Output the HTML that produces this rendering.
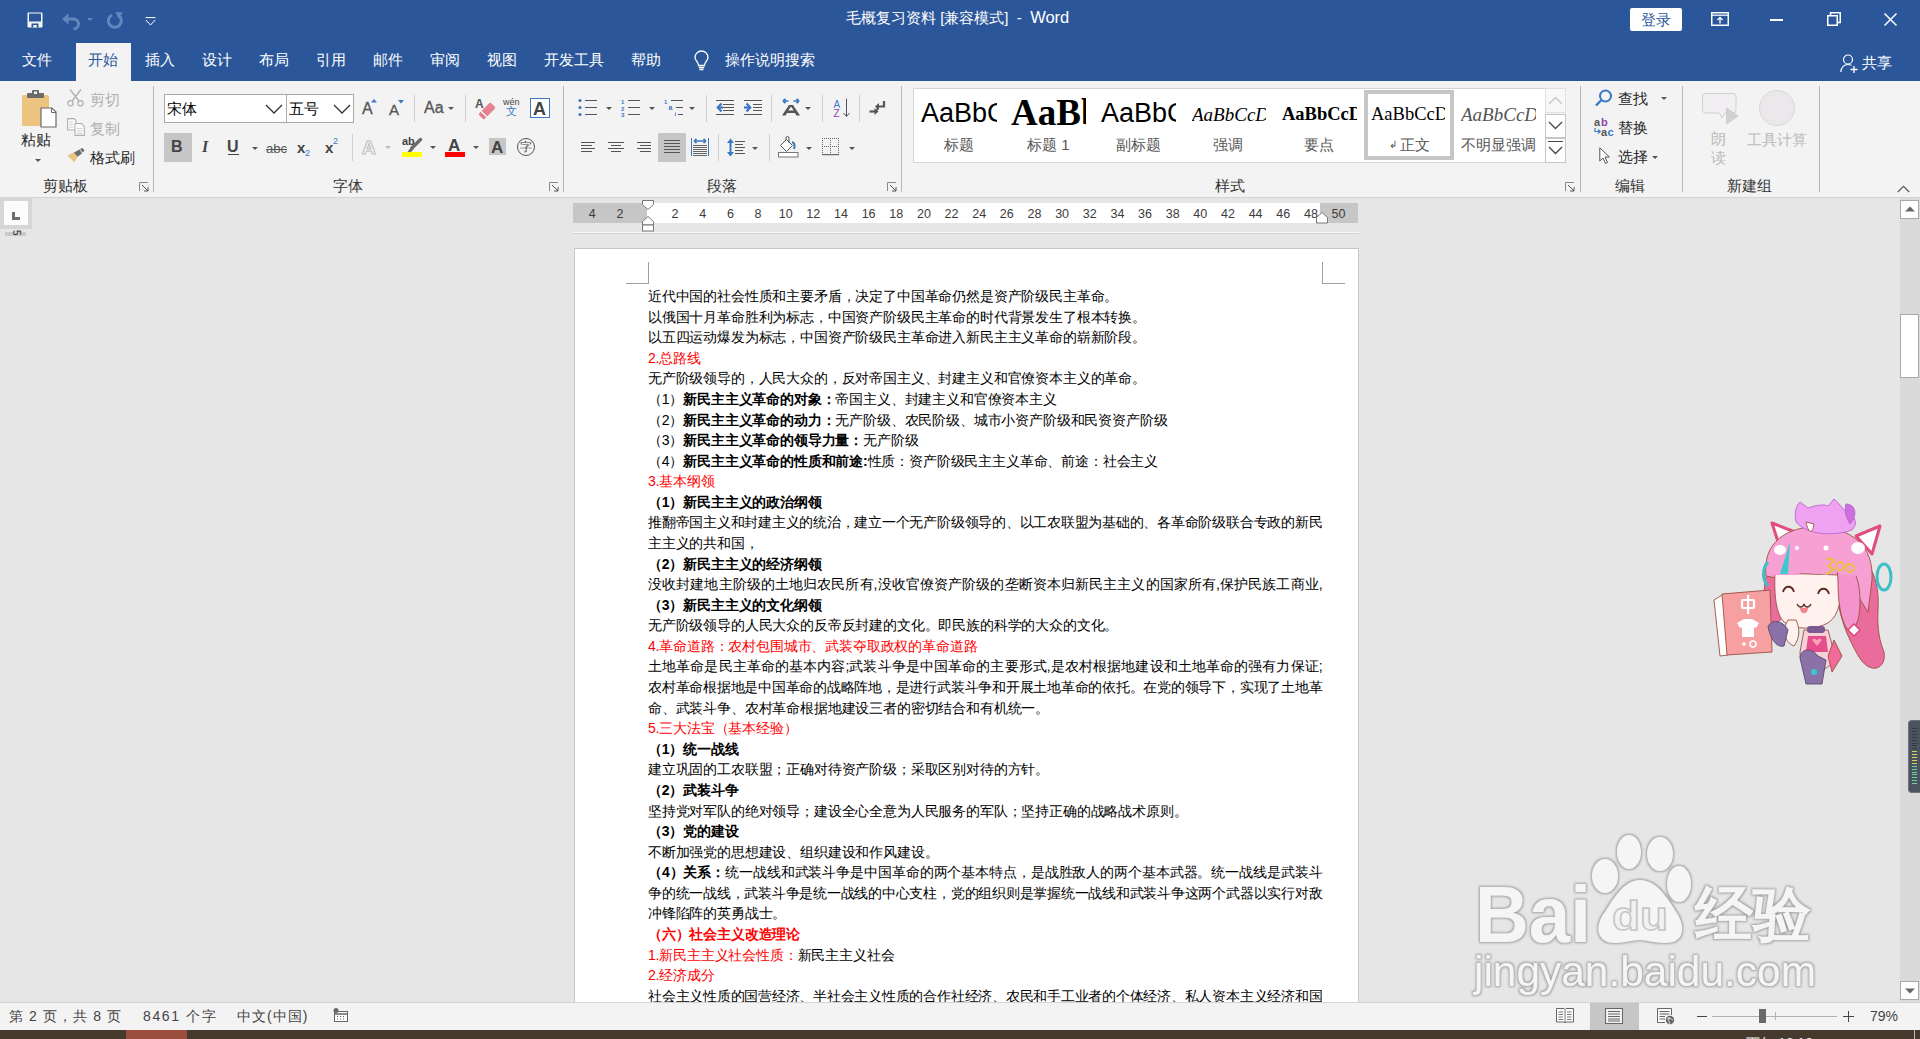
<!DOCTYPE html>
<html><head><meta charset="utf-8">
<style>
*{box-sizing:border-box}
html,body{margin:0;padding:0}
body{width:1920px;height:1039px;overflow:hidden;position:relative;background:#e6e6e6;font-family:"Liberation Sans",sans-serif;color:#262626}
.a{position:absolute}
.t{position:absolute;white-space:nowrap;line-height:1}
svg{position:absolute;overflow:visible}
#top{left:0;top:0;width:1920px;height:81px;background:#2b579a}
#ribbon{left:0;top:81px;width:1920px;height:117px;background:#f3f3f3;border-bottom:1px solid #d4d4d4}
.tab{position:absolute;top:51px;font-size:15px;color:#fff;line-height:17px;white-space:nowrap}
.lbl{position:absolute;top:177px;font-size:15px;color:#333;line-height:17px;white-space:nowrap}
.sep{position:absolute;width:1px;background:#b8b8b8}
.rt{position:absolute;font-size:15px;color:#262626;line-height:17px;white-space:nowrap}
.dd{position:absolute;width:0;height:0;border-left:3px solid transparent;border-right:3px solid transparent;border-top:3px solid #555}
#page{left:574px;top:248px;width:785px;height:760px;background:#fff;border:1px solid #c6c6c6;border-bottom:none}
.ln{position:absolute;left:73px;font-size:14px;letter-spacing:-0.17px;line-height:16px;white-space:nowrap;color:#000}
.j{width:674px;text-align:justify;text-align-last:justify;letter-spacing:-0.6px}
.r{color:#ff0000}
b{font-weight:bold}
</style></head><body>

<!-- ===== TOP BLUE ===== -->
<div id="top" class="a"></div>
<!-- quick access -->
<svg style="left:27px;top:12px" width="16" height="16" viewBox="0 0 16 16"><rect x="0.5" y="0.5" width="15" height="15" rx="1" fill="#f5f5f5"/><rect x="2" y="1.5" width="12" height="8" fill="#2b579a"/><rect x="4.5" y="11.5" width="7" height="4" fill="#2b579a"/><rect x="6.3" y="13" width="3.4" height="2.5" fill="#f5f5f5"/></svg>
<svg style="left:62px;top:14px" width="20" height="16" viewBox="0 0 20 16"><path d="M4 5 H11.5 A5 5 0 0 1 11.5 15" fill="none" stroke="#6286be" stroke-width="3"/><path d="M0 5 L6.5 -0.5 L6.5 10.5 Z" fill="#6286be"/></svg>
<div class="dd" style="left:87px;top:18px;border-top-color:#6286be"></div>
<svg style="left:107px;top:12px" width="17" height="17" viewBox="0 0 17 17"><path d="M11.5 3.5 A6.5 6.5 0 1 1 5 3" fill="none" stroke="#6286be" stroke-width="3"/><path d="M8.5 0 L16 0.5 L11.5 6.5 Z" fill="#6286be"/></svg>
<svg style="left:145px;top:17px" width="11" height="9" viewBox="0 0 11 9"><path d="M0.5 0.6 H10.5" stroke="#fff" stroke-width="1"/><path d="M0.8 3 L5.5 8 L10.2 3" fill="none" stroke="#fff" stroke-width="1"/></svg>
<div class="t" style="left:846px;top:9px;font-size:15px;color:#fff;line-height:17px">毛概复习资料 [兼容模式]&nbsp; -&nbsp; <span style="font-size:16.5px">Word</span></div>
<div class="a" style="left:1630px;top:8px;width:52px;height:23px;background:#fff;border-radius:2px"></div>
<div class="t" style="left:1641px;top:11px;font-size:15px;color:#2b579a;line-height:17px">登录</div>
<svg style="left:1711px;top:12px" width="18" height="14" viewBox="0 0 18 14"><rect x="0.75" y="0.75" width="16.5" height="12.5" fill="none" stroke="#fff" stroke-width="1.5"/><path d="M1 3.2 H17" stroke="#fff" stroke-width="1.2"/><path d="M9 11.5 V5.5 M6.5 8 L9 5.5 L11.5 8" fill="none" stroke="#fff" stroke-width="1.3"/></svg>
<div class="a" style="left:1770px;top:19px;width:13px;height:1.5px;background:#fff"></div>
<svg style="left:1827px;top:12px" width="14" height="14" viewBox="0 0 14 14"><rect x="0.75" y="3.75" width="9.5" height="9.5" fill="none" stroke="#fff" stroke-width="1.5"/><path d="M3.5 3.5 V0.75 H13.25 V10.5 H10.5" fill="none" stroke="#fff" stroke-width="1.5"/></svg>
<svg style="left:1884px;top:13px" width="13" height="13" viewBox="0 0 13 13"><path d="M0.5 0.5 L12.5 12.5 M12.5 0.5 L0.5 12.5" stroke="#fff" stroke-width="1.5"/></svg>

<!-- tabs -->
<div class="a" style="left:76px;top:43px;width:55px;height:38px;background:#f3f3f3"></div>
<div class="tab" style="left:22px">文件</div>
<div class="tab" style="left:88px;color:#2b579a">开始</div>
<div class="tab" style="left:145px">插入</div>
<div class="tab" style="left:202px">设计</div>
<div class="tab" style="left:259px">布局</div>
<div class="tab" style="left:316px">引用</div>
<div class="tab" style="left:373px">邮件</div>
<div class="tab" style="left:430px">审阅</div>
<div class="tab" style="left:487px">视图</div>
<div class="tab" style="left:544px">开发工具</div>
<div class="tab" style="left:631px">帮助</div>
<svg style="left:694px;top:51px" width="15" height="21" viewBox="0 0 15 21"><path d="M4.5 14.5 C4.5 11 1 9.5 1 6.5 A6.5 6.5 0 0 1 14 6.5 C14 9.5 10.5 11 10.5 14.5 Z" fill="none" stroke="#fff" stroke-width="1.3"/><path d="M4.8 16.5 H10.2 M5.5 18.5 H9.5" stroke="#fff" stroke-width="1.3"/></svg>
<div class="tab" style="left:725px">操作说明搜索</div>
<svg style="left:1840px;top:54px" width="19" height="19" viewBox="0 0 19 19"><circle cx="8" cy="5.5" r="4.5" fill="none" stroke="#fff" stroke-width="1.2"/><path d="M0.8 18 C1.5 12.5 4.5 10.5 8 10.5 C9.5 10.5 10.5 10.8 11.5 11.3" fill="none" stroke="#fff" stroke-width="1.2"/><path d="M14 12 V19 M10.5 15.5 H17.5" stroke="#fff" stroke-width="1.3"/></svg>
<div class="tab" style="left:1862px;top:54px">共享</div>

<!-- ===== RIBBON ===== -->
<div id="ribbon" class="a"></div>
<!-- clipboard group -->
<svg style="left:22px;top:90px" width="35" height="40" viewBox="0 0 35 40"><rect x="0" y="5" width="27" height="31" rx="1.5" fill="#ecc37f"/><rect x="5" y="3" width="17" height="5" rx="1" fill="#6b6b6b"/><rect x="10" y="0" width="7" height="5" rx="1" fill="#6b6b6b"/><rect x="12" y="1.5" width="3" height="2.5" fill="#f3f3f3"/><path d="M19 18 H30 L34 22 V37 H19 Z" fill="#fff" stroke="#6b6b6b" stroke-width="1.2"/><path d="M29.5 18 V22.5 H34" fill="none" stroke="#6b6b6b" stroke-width="1"/></svg>
<div class="rt" style="left:21px;top:131px">粘贴</div>
<div class="dd" style="left:35px;top:159px;border-left-width:3.5px;border-right-width:3.5px;border-top-width:3.5px"></div>
<svg style="left:67px;top:89px" width="17" height="18" viewBox="0 0 17 18"><circle cx="3.5" cy="14.3" r="2.6" fill="none" stroke="#b0b0b0" stroke-width="1.2"/><circle cx="13.5" cy="14.3" r="2.6" fill="none" stroke="#b0b0b0" stroke-width="1.2"/><path d="M5 12 L14 0.5 M12 12 L3 0.5" stroke="#b0b0b0" stroke-width="1.3"/></svg>
<div class="rt" style="left:90px;top:91px;color:#b0b0b0">剪切</div>
<svg style="left:67px;top:118px" width="18" height="18" viewBox="0 0 18 18"><path d="M0.6 0.6 H7 L9 2.6 V12 H0.6 Z" fill="#fafafa" stroke="#b0b0b0" stroke-width="1.1"/><path d="M8 5.5 H14.5 L17.4 8.4 V17.4 H8 Z" fill="#fafafa" stroke="#b0b0b0" stroke-width="1.1"/><path d="M2.5 4 H6 M2.5 6.5 H6 M2.5 9 H6 M10 10.5 H15.5 M10 13 H15.5 M10 15.5 H15.5" stroke="#c8c8c8" stroke-width="0.8"/></svg>
<div class="rt" style="left:90px;top:120px;color:#b0b0b0">复制</div>
<svg style="left:67px;top:148px" width="18" height="15" viewBox="0 0 18 15"><path d="M0.5 7.5 L7.5 4 L10.5 9 L7.5 14.5 Z" fill="#ecc37f"/><path d="M7 4.5 L12.5 1.5 L15 5.5 L10.5 8.7 Z" fill="#6b6b6b"/><path d="M13 1 L15.5 0 L17.5 2.5 L15.5 4.5 Z" fill="#6b6b6b"/></svg>
<div class="rt" style="left:90px;top:149px">格式刷</div>
<div class="lbl" style="left:43px">剪贴板</div>
<svg style="left:139px;top:182px" width="10" height="10" viewBox="0 0 10 10"><path d="M0.5 9 V0.5 H9" fill="none" stroke="#888" stroke-width="1"/><path d="M3 3 L9 9 M9 5 V9 H5" fill="none" stroke="#555" stroke-width="1"/></svg>
<div class="sep" style="left:153px;top:86px;height:106px"></div>

<!-- font group -->
<div class="a" style="left:164px;top:94px;width:123px;height:29px;background:#fff;border:1px solid #a9a9a9"></div>
<div class="a" style="left:286px;top:94px;width:68px;height:29px;background:#fff;border:1px solid #a9a9a9"></div>
<div class="rt" style="left:167px;top:100px;color:#000">宋体</div>
<div class="rt" style="left:289px;top:100px;color:#000">五号</div>
<svg style="left:265px;top:104px" width="18" height="10" viewBox="0 0 18 10"><path d="M1 1 L9 9 L17 1" fill="none" stroke="#333" stroke-width="1.3"/></svg>
<svg style="left:333px;top:104px" width="18" height="10" viewBox="0 0 18 10"><path d="M1 1 L9 9 L17 1" fill="none" stroke="#333" stroke-width="1.3"/></svg>
<div class="t" style="left:362px;top:101px;font-size:16px;color:#555;-webkit-text-stroke:0.3px #555">A</div>
<svg style="left:371px;top:99px" width="6" height="4" viewBox="0 0 6 4"><path d="M0 3.5 L3 0 L6 3.5Z" fill="#3a78c3"/></svg>
<div class="t" style="left:389px;top:102px;font-size:15px;color:#555;-webkit-text-stroke:0.3px #555">A</div>
<svg style="left:398px;top:100px" width="6" height="4" viewBox="0 0 6 4"><path d="M0 0 L3 3.5 L6 0Z" fill="#3a78c3"/></svg>
<div class="sep" style="left:414px;top:95px;height:27px;background:#d0d0d0"></div>
<div class="t" style="left:424px;top:100px;font-size:16px;color:#555;-webkit-text-stroke:0.3px #555">Aa</div>
<div class="dd" style="left:448px;top:107px"></div>
<div class="sep" style="left:465px;top:95px;height:27px;background:#d0d0d0"></div>
<div class="t" style="left:475px;top:98px;font-size:12px;font-weight:bold;color:#555">A</div>
<svg style="left:479px;top:103px" width="16" height="16" viewBox="0 0 16 16"><g transform="rotate(-45 8 8)"><rect x="-0.5" y="4" width="17" height="8" rx="1.8" fill="#e5828f"/><rect x="3" y="4" width="1.3" height="8" fill="#fff"/></g></svg>
<div class="t" style="left:503px;top:98px;font-size:9px;color:#444">wén</div>
<div class="t" style="left:506px;top:106px;font-size:11px;color:#3a78c3">文</div>
<div class="a" style="left:530px;top:98px;width:20px;height:20px;border:1.5px solid #3a78c3;background:#fff"></div>
<div class="t" style="left:533px;top:100px;font-size:18px;font-weight:bold;color:#444">A</div>
<div class="a" style="left:164px;top:133px;width:28px;height:29px;background:#c6c6c6"></div>
<div class="t" style="left:171px;top:139px;font-size:16px;font-weight:bold;color:#444">B</div>
<div class="t" style="left:202px;top:139px;font-size:16px;font-style:italic;font-family:'Liberation Serif',serif;font-weight:bold;color:#444">I</div>
<div class="t" style="left:227px;top:139px;font-size:16px;color:#444;font-weight:bold">U</div>
<div class="a" style="left:228px;top:154px;width:11px;height:1px;background:#444"></div>
<div class="dd" style="left:252px;top:147px"></div>
<div class="t" style="left:266px;top:142px;font-size:13px;color:#555">abc</div>
<div class="a" style="left:266px;top:149px;width:21px;height:1px;background:#555"></div>
<div class="t" style="left:297px;top:140px;font-size:15px;color:#444;font-weight:bold">x</div>
<div class="t" style="left:305px;top:149px;font-size:9px;color:#3a78c3">2</div>
<div class="t" style="left:325px;top:140px;font-size:15px;color:#444;font-weight:bold">x</div>
<div class="t" style="left:333px;top:137px;font-size:9px;color:#3a78c3">2</div>
<div class="sep" style="left:352px;top:134px;height:27px;background:#d0d0d0"></div>
<div class="t" style="left:362px;top:138px;font-size:19px;font-weight:bold;color:#fff;-webkit-text-stroke:1.2px #c0c0c0">A</div>
<div class="dd" style="left:385px;top:146px;border-top-color:#bbb"></div>
<div class="t" style="left:402px;top:136px;font-size:11px;font-weight:bold;color:#444">ab</div>
<svg style="left:406px;top:138px" width="16" height="15" viewBox="0 0 16 15"><path d="M14.5 1.5 L6 10" stroke="#6b6b6b" stroke-width="3.4" stroke-linecap="round"/><path d="M5 9 L7.5 11.5 L5 14 L1.5 14 Z" fill="#6b6b6b"/></svg>
<div class="a" style="left:402px;top:152px;width:20px;height:5px;background:#ffff00"></div>
<div class="dd" style="left:430px;top:146px"></div>
<div class="t" style="left:448px;top:137px;font-size:17px;font-weight:bold;color:#444">A</div>
<div class="a" style="left:445px;top:152px;width:20px;height:5px;background:#ff0000"></div>
<div class="dd" style="left:473px;top:146px"></div>
<div class="a" style="left:489px;top:138px;width:17px;height:17px;background:#c6c6c6"></div>
<div class="t" style="left:491px;top:139px;font-size:17px;font-weight:bold;color:#444">A</div>
<div class="a" style="left:517px;top:138px;width:18px;height:18px;border:1px solid #555;border-radius:50%"></div>
<div class="t" style="left:520px;top:141px;font-size:12px;color:#444">字</div>
<div class="lbl" style="left:333px">字体</div>
<svg style="left:549px;top:182px" width="10" height="10" viewBox="0 0 10 10"><path d="M0.5 9 V0.5 H9" fill="none" stroke="#888" stroke-width="1"/><path d="M3 3 L9 9 M9 5 V9 H5" fill="none" stroke="#555" stroke-width="1"/></svg>
<div class="sep" style="left:563px;top:86px;height:106px"></div>
<!-- paragraph group -->
<svg style="left:578px;top:98px" width="20" height="18" viewBox="0 0 20 18"><circle cx="2" cy="2.5" r="1.6" fill="#3a78c3"/><circle cx="2" cy="9.5" r="1.6" fill="#3a78c3"/><circle cx="2" cy="16.5" r="1.6" fill="#3a78c3"/><path d="M7 2.5 H19 M7 9.5 H19 M7 16.5 H19" stroke="#555" stroke-width="1.1"/></svg>
<div class="dd" style="left:606px;top:107px"></div>
<svg style="left:621px;top:98px" width="20" height="19" viewBox="0 0 20 19"><text x="0" y="6" font-size="6" fill="#3a78c3" font-family="Liberation Sans" font-weight="bold">1</text><text x="0" y="12.5" font-size="6" fill="#3a78c3" font-family="Liberation Sans" font-weight="bold">2</text><text x="0" y="19" font-size="6" fill="#3a78c3" font-family="Liberation Sans" font-weight="bold">3</text><path d="M7 2.5 H19 M7 9.5 H19 M7 16.5 H19" stroke="#555" stroke-width="1.1"/></svg>
<div class="dd" style="left:649px;top:107px"></div>
<svg style="left:664px;top:98px" width="20" height="19" viewBox="0 0 20 19"><text x="0" y="6" font-size="6" fill="#3a78c3" font-family="Liberation Sans" font-weight="bold">1</text><text x="4.5" y="12" font-size="7" fill="#3a78c3" font-family="Liberation Sans" font-weight="bold">a</text><text x="10.5" y="18" font-size="6" fill="#3a78c3" font-family="Liberation Sans" font-weight="bold">i</text><path d="M7 2.5 H19 M12 9.5 H19 M14 16.5 H19" stroke="#555" stroke-width="1.1"/></svg>
<div class="dd" style="left:689px;top:107px"></div>
<div class="sep" style="left:706px;top:95px;height:27px;background:#d0d0d0"></div>
<svg style="left:716px;top:100px" width="19" height="16" viewBox="0 0 19 16"><path d="M0 0.5 H18 M7 4.5 H18 M7 7.5 H18 M7 10.5 H18 M0 14.5 H18" stroke="#555" stroke-width="1"/><path d="M5.5 3.5 L1.8 7.5 L5.5 11.5" fill="none" stroke="#3a78c3" stroke-width="2.2"/><path d="M2 7.5 H7" stroke="#3a78c3" stroke-width="2.2"/></svg>
<svg style="left:744px;top:100px" width="19" height="16" viewBox="0 0 19 16"><path d="M0 0.5 H18 M9 4.5 H18 M9 7.5 H18 M9 10.5 H18 M0 14.5 H18" stroke="#555" stroke-width="1"/><path d="M2.5 3.5 L6.2 7.5 L2.5 11.5" fill="none" stroke="#3a78c3" stroke-width="2.2"/><path d="M0 7.5 H6" stroke="#3a78c3" stroke-width="2.2"/></svg>
<div class="sep" style="left:771px;top:95px;height:27px;background:#d0d0d0"></div>
<svg style="left:781px;top:98px" width="20" height="18" viewBox="0 0 20 18"><path d="M2 3 H7.5 M2 3 L4.5 0.8 M2 3 L4.5 5.2 M18 3 H12.5 M18 3 L15.5 0.8 M18 3 L15.5 5.2" fill="none" stroke="#3a78c3" stroke-width="1.7"/><path d="M1 17.5 L8 7 H12 L19 17.5 H15.5 L14 15 H6 L4.5 17.5 Z M7.3 12.5 H12.7 L10 8.5 Z" fill="#555" fill-rule="evenodd"/></svg>
<div class="dd" style="left:805px;top:107px"></div>
<div class="sep" style="left:822px;top:95px;height:27px;background:#d0d0d0"></div>
<svg style="left:833px;top:98px" width="18" height="20" viewBox="0 0 18 20"><text x="0.5" y="9.5" font-size="10" fill="#3a78c3" font-family="Liberation Sans">A</text><text x="0.5" y="19" font-size="10" fill="#8e44ad" font-family="Liberation Sans">Z</text><path d="M13.5 0.5 V18 M10.5 15 L13.5 18.5 L16.5 15" fill="none" stroke="#555" stroke-width="1"/></svg>
<div class="sep" style="left:859px;top:95px;height:27px;background:#d0d0d0"></div>
<svg style="left:869px;top:100px" width="17" height="16" viewBox="0 0 17 16"><path d="M15 1 V6.5 H8" fill="none" stroke="#555" stroke-width="2.2"/><path d="M6 6.5 L10 3 V10 Z" fill="#555"/><path d="M0.5 11.5 H7" fill="none" stroke="#555" stroke-width="2.2"/><path d="M9.5 11.5 L5.5 8 V15 Z" fill="#555"/><path d="M7 11 L9 8" stroke="#555" stroke-width="1.5"/></svg>

<svg style="left:581px;top:142px" width="15" height="11" viewBox="0 0 15 11"><path d="M0 0.5 H14 M0 3.5 H11 M0 6.5 H14 M0 9.5 H11" stroke="#555" stroke-width="1"/></svg>
<svg style="left:608px;top:142px" width="17" height="11" viewBox="0 0 17 11"><path d="M0 0.5 H16 M3 3.5 H13 M0 6.5 H16 M3 9.5 H13" stroke="#555" stroke-width="1"/></svg>
<svg style="left:637px;top:142px" width="15" height="11" viewBox="0 0 15 11"><path d="M0 0.5 H14 M3 3.5 H14 M0 6.5 H14 M3 9.5 H14" stroke="#555" stroke-width="1"/></svg>
<div class="a" style="left:658px;top:133px;width:28px;height:29px;background:#c6c6c6"></div>
<svg style="left:664px;top:140px" width="17" height="14" viewBox="0 0 17 14"><path d="M0 0.5 H16 M0 3.5 H16 M0 6.5 H16 M0 9.5 H16 M0 12.5 H16" stroke="#555" stroke-width="1"/></svg>
<svg style="left:691px;top:138px" width="18" height="19" viewBox="0 0 18 19"><path d="M0.5 0 V18 M17.5 0 V18" stroke="#3a78c3" stroke-width="1"/><path d="M3 3 H15 M3 3 L5.5 0.8 M3 3 L5.5 5.2 M15 3 L12.5 0.8 M15 3 L12.5 5.2" fill="none" stroke="#3a78c3" stroke-width="1.6"/><path d="M2 7.5 H16 M2 9.5 H16 M2 11.5 H16 M2 13.5 H16 M2 15.5 H16 M2 17.5 H16" stroke="#555" stroke-width="0.9"/></svg>
<div class="sep" style="left:718px;top:134px;height:27px;background:#d0d0d0"></div>
<svg style="left:727px;top:138px" width="19" height="19" viewBox="0 0 19 19"><path d="M3.5 3 V16" stroke="#3a78c3" stroke-width="2"/><path d="M0 5 L3.5 0.5 L7 5 Z M0 14 L3.5 18.5 L7 14 Z" fill="#3a78c3"/><path d="M8 3.5 H18 M8 6.5 H16 M8 9.5 H18 M8 12.5 H16 M8 15.5 H18" stroke="#555" stroke-width="1"/></svg>
<div class="dd" style="left:752px;top:147px"></div>
<div class="sep" style="left:769px;top:134px;height:27px;background:#d0d0d0"></div>
<svg style="left:778px;top:137px" width="21" height="21" viewBox="0 0 21 21"><path d="M2.5 8.5 L8.5 2.5 L14.5 8.5 L8.5 14.5 Z" fill="#fff" stroke="#555" stroke-width="1"/><path d="M8 3 V1 A1.5 1.5 0 0 1 11 1 V6" fill="none" stroke="#555" stroke-width="1"/><path d="M14 5 C17 6 17 9 16 12" fill="none" stroke="#3a78c3" stroke-width="2"/><rect x="0.5" y="15.5" width="19.5" height="4.5" fill="#fff" stroke="#777" stroke-width="1"/></svg>
<div class="dd" style="left:806px;top:147px"></div>
<svg style="left:822px;top:138px" width="18" height="18" viewBox="0 0 18 18"><g fill="#666"><rect x="0" y="0" width="1" height="1"/><rect x="2" y="0" width="1" height="1"/><rect x="4" y="0" width="1" height="1"/><rect x="6" y="0" width="1" height="1"/><rect x="8" y="0" width="1" height="1"/><rect x="10" y="0" width="1" height="1"/><rect x="12" y="0" width="1" height="1"/><rect x="14" y="0" width="1" height="1"/><rect x="16" y="0" width="1" height="1"/><rect x="0" y="8" width="1" height="1"/><rect x="2" y="8" width="1" height="1"/><rect x="4" y="8" width="1" height="1"/><rect x="6" y="8" width="1" height="1"/><rect x="8" y="8" width="1" height="1"/><rect x="10" y="8" width="1" height="1"/><rect x="12" y="8" width="1" height="1"/><rect x="14" y="8" width="1" height="1"/><rect x="16" y="8" width="1" height="1"/><rect x="0" y="2" width="1" height="1"/><rect x="0" y="4" width="1" height="1"/><rect x="0" y="6" width="1" height="1"/><rect x="0" y="8" width="1" height="1"/><rect x="0" y="10" width="1" height="1"/><rect x="0" y="12" width="1" height="1"/><rect x="0" y="14" width="1" height="1"/><rect x="8" y="2" width="1" height="1"/><rect x="8" y="4" width="1" height="1"/><rect x="8" y="6" width="1" height="1"/><rect x="8" y="8" width="1" height="1"/><rect x="8" y="10" width="1" height="1"/><rect x="8" y="12" width="1" height="1"/><rect x="8" y="14" width="1" height="1"/><rect x="16" y="2" width="1" height="1"/><rect x="16" y="4" width="1" height="1"/><rect x="16" y="6" width="1" height="1"/><rect x="16" y="8" width="1" height="1"/><rect x="16" y="10" width="1" height="1"/><rect x="16" y="12" width="1" height="1"/><rect x="16" y="14" width="1" height="1"/></g><rect x="0" y="16" width="17" height="1.2" fill="#666"/></svg>
<div class="dd" style="left:849px;top:147px"></div>
<div class="lbl" style="left:707px">段落</div>
<svg style="left:887px;top:182px" width="10" height="10" viewBox="0 0 10 10"><path d="M0.5 9 V0.5 H9" fill="none" stroke="#888" stroke-width="1"/><path d="M3 3 L9 9 M9 5 V9 H5" fill="none" stroke="#555" stroke-width="1"/></svg>
<div class="sep" style="left:901px;top:86px;height:106px"></div>

<!-- styles gallery -->
<div class="a" style="left:913px;top:88px;width:654px;height:75px;background:#fff;border:1px solid #d5d5d5"></div>
<div class="a" style="left:921px;top:92px;width:76px;height:40px;overflow:hidden"><div class="t" style="left:0;top:8px;font-size:27px;color:#000">AaBbCcD</div></div>
<div class="t" style="left:944px;top:136px;font-size:15px;color:#555;line-height:17px">标题</div>
<div class="a" style="left:1011px;top:92px;width:75px;height:40px;overflow:hidden"><div class="t" style="left:0;top:2px;font-size:37px;color:#000;font-family:'Liberation Serif',serif;font-weight:bold">AaBbC</div></div>
<div class="t" style="left:1027px;top:136px;font-size:15px;color:#555;line-height:17px">标题 1</div>
<div class="a" style="left:1101px;top:92px;width:75px;height:40px;overflow:hidden"><div class="t" style="left:0;top:8px;font-size:27px;color:#000">AaBbCcD</div></div>
<div class="t" style="left:1116px;top:136px;font-size:15px;color:#555;line-height:17px">副标题</div>
<div class="a" style="left:1192px;top:92px;width:74px;height:40px;overflow:hidden"><div class="t" style="left:0;top:13px;font-size:19px;color:#000;font-family:'Liberation Serif',serif;font-style:italic">AaBbCcDdE</div></div>
<div class="t" style="left:1213px;top:136px;font-size:15px;color:#555;line-height:17px">强调</div>
<div class="a" style="left:1282px;top:92px;width:75px;height:40px;overflow:hidden"><div class="t" style="left:0;top:13px;font-size:18.5px;color:#000;font-family:'Liberation Serif',serif;font-weight:bold">AaBbCcDdE</div></div>
<div class="t" style="left:1304px;top:136px;font-size:15px;color:#555;line-height:17px">要点</div>
<div class="a" style="left:1364px;top:90px;width:90px;height:70px;border:4px solid #c6c6c6"></div>
<div class="a" style="left:1371px;top:92px;width:74px;height:40px;overflow:hidden"><div class="t" style="left:0;top:13px;font-size:18.5px;color:#000;font-family:'Liberation Serif',serif">AaBbCcDdE</div></div>
<div class="t" style="left:1389px;top:140px;font-size:10px;color:#555">↲</div>
<div class="t" style="left:1400px;top:136px;font-size:15px;color:#555;line-height:17px">正文</div>
<div class="a" style="left:1461px;top:92px;width:75px;height:40px;overflow:hidden"><div class="t" style="left:0;top:13px;font-size:19px;color:#555;font-family:'Liberation Serif',serif;font-style:italic">AaBbCcDdE</div></div>
<div class="t" style="left:1461px;top:136px;font-size:15px;color:#555;line-height:17px">不明显强调</div>
<div class="a" style="left:1545px;top:88px;width:22px;height:75px;background:#f3f3f3"></div>
<div class="a" style="left:1545px;top:88px;width:21px;height:25px;border:1px solid #e0e0e0;background:#f8f8f8"></div>
<svg style="left:1548px;top:96px" width="15" height="9" viewBox="0 0 15 9"><path d="M1 8 L7.5 1.5 L14 8" fill="none" stroke="#c6c6c6" stroke-width="1.3"/></svg>
<div class="a" style="left:1545px;top:114px;width:21px;height:24px;border:1px solid #c6c6c6;background:#fff"></div>
<svg style="left:1548px;top:121px" width="15" height="9" viewBox="0 0 15 9"><path d="M1 1 L7.5 7.5 L14 1" fill="none" stroke="#444" stroke-width="1.3"/></svg>
<div class="a" style="left:1545px;top:138px;width:21px;height:25px;border:1px solid #c6c6c6;background:#fff"></div>
<div class="a" style="left:1548px;top:141px;width:15px;height:1px;background:#444"></div>
<svg style="left:1548px;top:146px" width="15" height="9" viewBox="0 0 15 9"><path d="M1 1 L7.5 7.5 L14 1" fill="none" stroke="#444" stroke-width="1.3"/></svg>
<div class="lbl" style="left:1215px">样式</div>
<svg style="left:1565px;top:182px" width="10" height="10" viewBox="0 0 10 10"><path d="M0.5 9 V0.5 H9" fill="none" stroke="#888" stroke-width="1"/><path d="M3 3 L9 9 M9 5 V9 H5" fill="none" stroke="#555" stroke-width="1"/></svg>
<div class="sep" style="left:1580px;top:86px;height:106px"></div>

<!-- editing -->
<svg style="left:1595px;top:89px" width="18" height="18" viewBox="0 0 18 18"><circle cx="10.5" cy="7" r="5.5" fill="none" stroke="#3a78c3" stroke-width="2"/><path d="M6.5 11 L1 16.5" stroke="#3a78c3" stroke-width="2.4"/></svg>
<div class="rt" style="left:1618px;top:90px">查找</div>
<div class="dd" style="left:1661px;top:97px"></div>
<svg style="left:1593px;top:117px" width="22" height="20" viewBox="0 0 22 20"><text x="1" y="9" font-size="11" fill="#555" font-family="Liberation Sans" font-weight="bold">a</text><text x="8" y="9" font-size="11" fill="#8e44ad" font-family="Liberation Sans" font-weight="bold">b</text><text x="8" y="19" font-size="11" fill="#555" font-family="Liberation Sans" font-weight="bold">a</text><text x="14.5" y="19" font-size="11" fill="#3a78c3" font-family="Liberation Sans" font-weight="bold">c</text><path d="M2 11 V14.5 H7 M5 12.5 L7.2 14.5 L5 16.5" fill="none" stroke="#3a78c3" stroke-width="1.2"/></svg>
<div class="rt" style="left:1618px;top:119px">替换</div>
<svg style="left:1599px;top:147px" width="12" height="18" viewBox="0 0 12 18"><path d="M0.8 0.8 L0.8 14 L4 11 L6.5 16.5 L8.5 15.5 L6 10 L10.5 10 Z" fill="#fff" stroke="#555" stroke-width="1"/></svg>
<div class="rt" style="left:1618px;top:148px">选择</div>
<div class="dd" style="left:1652px;top:156px"></div>
<div class="lbl" style="left:1615px">编辑</div>
<div class="sep" style="left:1682px;top:86px;height:106px"></div>

<!-- new group -->
<svg style="left:1702px;top:93px" width="38" height="35" viewBox="0 0 38 35"><path d="M3 0.5 H31 A3 3 0 0 1 34 3.5 V17 A3 3 0 0 1 31 20 H23 L20 25 L17 20 H3 A3 3 0 0 1 0.5 17 V3.5 A3 3 0 0 1 3 0.5 Z" fill="#f2eff2" stroke="#d0d0d0" stroke-width="1"/><path d="M24 14 L37 23 L24 32 Z" fill="#d0d0d0"/></svg>
<div class="rt" style="left:1711px;top:130px;color:#bbb">朗</div>
<div class="rt" style="left:1711px;top:149px;color:#bbb">读</div>
<div class="a" style="left:1759px;top:90px;width:36px;height:36px;border-radius:50%;background:#ebe7eb;border:1px solid #d8d8d8"></div>
<div class="rt" style="left:1747px;top:131px;color:#bbb">工具计算</div>
<div class="lbl" style="left:1727px">新建组</div>
<div class="sep" style="left:1819px;top:86px;height:106px"></div>
<svg style="left:1897px;top:185px" width="13" height="8" viewBox="0 0 13 8"><path d="M0.8 7 L6.5 1.3 L12.2 7" fill="none" stroke="#555" stroke-width="1.1"/></svg>

<!--RIBBONDONE-->

<!-- ===== DOC AREA ===== -->
<div class="a" style="left:0;top:197px;width:32px;height:32px;background:#d6d6d6"></div>
<div class="a" style="left:4px;top:201px;width:24px;height:24px;background:#fcfcfc"></div>
<div class="a" style="left:12px;top:212px;width:3px;height:8px;background:#6e6e6e"></div><div class="a" style="left:12px;top:217px;width:8px;height:3px;background:#6e6e6e"></div>
<div class="a" style="left:5px;top:232px;width:21px;height:4px;background:#cacaca"></div>
<div class="t" style="left:11px;top:230px;font-size:10px;color:#333;transform:rotate(90deg);transform-origin:5px 5px">5</div>
<div class="a" style="left:573px;top:203px;width:785px;height:20px;background:#fff"></div>
<div class="a" style="left:573px;top:203px;width:74px;height:20px;background:#c6c6c6"></div>
<div class="a" style="left:1320px;top:203px;width:38px;height:20px;background:#c6c6c6"></div>
<div class="a" style="left:574px;top:232px;width:785px;height:1px;background:#fafafa"></div><div class="a" style="left:574px;top:233px;width:785px;height:1px;background:#d0d0d0"></div>
<div class="t" style="left:588.7px;top:208px;width:7px;text-align:center;font-size:12.5px;color:#3c3c3c">4</div>
<div class="t" style="left:616.4px;top:208px;width:7px;text-align:center;font-size:12.5px;color:#3c3c3c">2</div>
<div class="t" style="left:671.6px;top:208px;width:7px;text-align:center;font-size:12.5px;color:#3c3c3c">2</div>
<div class="t" style="left:699.3px;top:208px;width:7px;text-align:center;font-size:12.5px;color:#3c3c3c">4</div>
<div class="t" style="left:726.9px;top:208px;width:7px;text-align:center;font-size:12.5px;color:#3c3c3c">6</div>
<div class="t" style="left:754.6px;top:208px;width:7px;text-align:center;font-size:12.5px;color:#3c3c3c">8</div>
<div class="t" style="left:778.7px;top:208px;width:14px;text-align:center;font-size:12.5px;color:#3c3c3c">10</div>
<div class="t" style="left:806.3px;top:208px;width:14px;text-align:center;font-size:12.5px;color:#3c3c3c">12</div>
<div class="t" style="left:834.0px;top:208px;width:14px;text-align:center;font-size:12.5px;color:#3c3c3c">14</div>
<div class="t" style="left:861.6px;top:208px;width:14px;text-align:center;font-size:12.5px;color:#3c3c3c">16</div>
<div class="t" style="left:889.3px;top:208px;width:14px;text-align:center;font-size:12.5px;color:#3c3c3c">18</div>
<div class="t" style="left:916.9px;top:208px;width:14px;text-align:center;font-size:12.5px;color:#3c3c3c">20</div>
<div class="t" style="left:944.5px;top:208px;width:14px;text-align:center;font-size:12.5px;color:#3c3c3c">22</div>
<div class="t" style="left:972.2px;top:208px;width:14px;text-align:center;font-size:12.5px;color:#3c3c3c">24</div>
<div class="t" style="left:999.8px;top:208px;width:14px;text-align:center;font-size:12.5px;color:#3c3c3c">26</div>
<div class="t" style="left:1027.5px;top:208px;width:14px;text-align:center;font-size:12.5px;color:#3c3c3c">28</div>
<div class="t" style="left:1055.1px;top:208px;width:14px;text-align:center;font-size:12.5px;color:#3c3c3c">30</div>
<div class="t" style="left:1082.7px;top:208px;width:14px;text-align:center;font-size:12.5px;color:#3c3c3c">32</div>
<div class="t" style="left:1110.4px;top:208px;width:14px;text-align:center;font-size:12.5px;color:#3c3c3c">34</div>
<div class="t" style="left:1138.0px;top:208px;width:14px;text-align:center;font-size:12.5px;color:#3c3c3c">36</div>
<div class="t" style="left:1165.7px;top:208px;width:14px;text-align:center;font-size:12.5px;color:#3c3c3c">38</div>
<div class="t" style="left:1193.3px;top:208px;width:14px;text-align:center;font-size:12.5px;color:#3c3c3c">40</div>
<div class="t" style="left:1220.9px;top:208px;width:14px;text-align:center;font-size:12.5px;color:#3c3c3c">42</div>
<div class="t" style="left:1248.6px;top:208px;width:14px;text-align:center;font-size:12.5px;color:#3c3c3c">44</div>
<div class="t" style="left:1276.2px;top:208px;width:14px;text-align:center;font-size:12.5px;color:#3c3c3c">46</div>
<div class="t" style="left:1303.9px;top:208px;width:14px;text-align:center;font-size:12.5px;color:#3c3c3c">48</div>
<div class="t" style="left:1331.5px;top:208px;width:14px;text-align:center;font-size:12.5px;color:#3c3c3c">50</div>
<svg style="left:642px;top:200px" width="12" height="32" viewBox="0 0 12 32"><path d="M0.5 0.5 H11.5 V4.5 L6 9.5 L0.5 4.5 Z" fill="#fff" stroke="#777" stroke-width="1"/><path d="M6 16.5 L11.5 21.5 V25 H0.5 V21.5 Z" fill="#fff" stroke="#777" stroke-width="1"/><rect x="0.5" y="25" width="11" height="6" fill="#fff" stroke="#777" stroke-width="1"/></svg>
<svg style="left:1316px;top:212px" width="12" height="12" viewBox="0 0 12 12"><path d="M6 0.5 L11.5 5.5 V11 H0.5 V5.5 Z" fill="#fff" stroke="#777" stroke-width="1"/></svg>
<div id="page" class="a"></div>
<div class="a" style="left:648px;top:262px;width:1px;height:22px;background:#a0a0a0"></div><div class="a" style="left:626px;top:283px;width:23px;height:1px;background:#a0a0a0"></div>
<div class="a" style="left:1322px;top:262px;width:1px;height:22px;background:#a0a0a0"></div><div class="a" style="left:1322px;top:283px;width:23px;height:1px;background:#a0a0a0"></div>


<!--DOC-->
<div class="a" style="left:575px;top:248px;width:783px;height:755px;overflow:hidden">
<div class="ln" style="top:40.0px">近代中国的社会性质和主要矛盾，决定了中国革命仍然是资产阶级民主革命。</div>
<div class="ln" style="top:60.6px">以俄国十月革命胜利为标志，中国资产阶级民主革命的时代背景发生了根本转换。</div>
<div class="ln" style="top:81.2px">以五四运动爆发为标志，中国资产阶级民主革命进入新民主主义革命的崭新阶段。</div>
<div class="ln" style="top:101.7px"><span class="r">2.总路线</span></div>
<div class="ln" style="top:122.3px">无产阶级领导的，人民大众的，反对帝国主义、封建主义和官僚资本主义的革命。</div>
<div class="ln" style="top:142.9px">（1）<b>新民主主义革命的对象：</b>帝国主义、封建主义和官僚资本主义</div>
<div class="ln" style="top:163.5px">（2）<b>新民主主义革命的动力：</b>无产阶级、农民阶级、城市小资产阶级和民资资产阶级</div>
<div class="ln" style="top:184.1px">（3）<b>新民主主义革命的领导力量：</b>无产阶级</div>
<div class="ln" style="top:204.6px">（4）<b>新民主主义革命的性质和前途:</b>性质：资产阶级民主主义革命、前途：社会主义</div>
<div class="ln" style="top:225.2px"><span class="r">3.基本纲领</span></div>
<div class="ln" style="top:245.8px"><b>（1）新民主主义的政治纲领</b></div>
<div class="ln j" style="top:266.4px">推翻帝国主义和封建主义的统治，建立一个无产阶级领导的、以工农联盟为基础的、各革命阶级联合专政的新民</div>
<div class="ln" style="top:287.0px">主主义的共和国，</div>
<div class="ln" style="top:307.5px"><b>（2）新民主主义的经济纲领</b></div>
<div class="ln j" style="top:328.1px">没收封建地主阶级的土地归农民所有,没收官僚资产阶级的垄断资本归新民主主义的国家所有,保护民族工商业,</div>
<div class="ln" style="top:348.7px"><b>（3）新民主主义的文化纲领</b></div>
<div class="ln" style="top:369.3px">无产阶级领导的人民大众的反帝反封建的文化。即民族的科学的大众的文化。</div>
<div class="ln" style="top:389.9px"><span class="r">4.革命道路：农村包围城市、武装夺取政权的革命道路</span></div>
<div class="ln j" style="top:410.4px">土地革命是民主革命的基本内容;武装斗争是中国革命的主要形式,是农村根据地建设和土地革命的强有力保证;</div>
<div class="ln j" style="top:431.0px">农村革命根据地是中国革命的战略阵地，是进行武装斗争和开展土地革命的依托。在党的领导下，实现了土地革</div>
<div class="ln" style="top:451.6px">命、武装斗争、农村革命根据地建设三者的密切结合和有机统一。</div>
<div class="ln" style="top:472.2px"><span class="r">5.三大法宝（基本经验）</span></div>
<div class="ln" style="top:492.8px"><b>（1）统一战线</b></div>
<div class="ln" style="top:513.3px">建立巩固的工农联盟；正确对待资产阶级；采取区别对待的方针。</div>
<div class="ln" style="top:533.9px"><b>（2）武装斗争</b></div>
<div class="ln" style="top:554.5px">坚持党对军队的绝对领导；建设全心全意为人民服务的军队；坚持正确的战略战术原则。</div>
<div class="ln" style="top:575.1px"><b>（3）党的建设</b></div>
<div class="ln" style="top:595.7px">不断加强党的思想建设、组织建设和作风建设。</div>
<div class="ln j" style="top:616.2px"><b>（4）关系：</b>统一战线和武装斗争是中国革命的两个基本特点，是战胜敌人的两个基本武器。统一战线是武装斗</div>
<div class="ln j" style="top:636.8px">争的统一战线，武装斗争是统一战线的中心支柱，党的组织则是掌握统一战线和武装斗争这两个武器以实行对敌</div>
<div class="ln" style="top:657.4px">冲锋陷阵的英勇战士。</div>
<div class="ln" style="top:678.0px"><b class="r">（六）社会主义改造理论</b></div>
<div class="ln" style="top:698.6px"><span class="r">1.新民主主义社会性质：</span>新民主主义社会</div>
<div class="ln" style="top:719.1px"><span class="r">2.经济成分</span></div>
<div class="ln j" style="top:739.7px">社会主义性质的国营经济、半社会主义性质的合作社经济、农民和手工业者的个体经济、私人资本主义经济和国</div>
</div>
<!--/DOC-->

<!-- baidu watermark -->
<svg style="left:1440px;top:820px" width="400" height="190" viewBox="0 0 400 190">
<defs><filter id="wm" x="-5%" y="-5%" width="110%" height="110%"><feMorphology in="SourceAlpha" operator="dilate" radius="1" result="d"/><feGaussianBlur in="d" stdDeviation="1.3" result="b"/><feFlood flood-color="#a0a0a0"/><feComposite in2="b" operator="in" result="s"/><feMerge><feMergeNode in="s"/><feMergeNode in="SourceGraphic"/></feMerge></filter></defs>
<g filter="url(#wm)">
<text x="35" y="122" font-family="Liberation Sans" font-size="80" font-weight="bold" fill="#f5f5f5" textLength="116" lengthAdjust="spacingAndGlyphs">Bai</text>
<g fill="#f5f5f5"><ellipse cx="165" cy="56" rx="13" ry="17"/><ellipse cx="189" cy="32" rx="12" ry="17"/><ellipse cx="220" cy="34" rx="13" ry="17"/><ellipse cx="239" cy="64" rx="12" ry="18"/><path d="M200 60 C215 60 225 74 235 90 C245 104 247 123 225 123 C213 123 207 120 200 120 C192 120 185 123 175 123 C155 123 155 104 165 92 C175 76 185 60 200 60 Z"/></g>
<text x="255" y="115" font-family="Liberation Sans" font-size="60" font-weight="bold" fill="#f5f5f5" textLength="116" lengthAdjust="spacingAndGlyphs">经验</text>
<text x="34" y="166" font-family="Liberation Sans" font-size="43" fill="#f5f5f5" textLength="342" lengthAdjust="spacingAndGlyphs">jingyan.baidu.com</text>
</g>
<text x="172" y="110" font-family="Liberation Sans" font-size="40" font-weight="bold" fill="#f2f2f2" stroke="#c4c4c4" stroke-width="1.4" textLength="56" lengthAdjust="spacingAndGlyphs">du</text>
</svg>
<!-- mascot -->
<svg style="left:1700px;top:480px" width="220" height="220" viewBox="0 0 220 220">
 <g stroke="#9a5040" stroke-width="0.9" stroke-linejoin="round">
 <!-- braid / long hair right -->
 <path d="M140 70 C170 72 180 100 178 130 C177 150 180 162 184 172 C186 182 180 190 172 188 C162 186 156 172 150 160 C140 140 134 110 136 90 Z" fill="#ea6c9c"/>
 <!-- left side hair -->
 <path d="M72 80 C62 100 62 125 70 140 C76 146 84 140 84 130 L80 90 Z" fill="#ea6c9c"/>
 <!-- ears -->
 <path d="M72 43 L95 52 L80 68 Z" fill="#fff" stroke="#e24c80" stroke-width="3"/>
 <path d="M156 56 L180 46 L172 74 Z" fill="#fff" stroke="#e24c80" stroke-width="3"/>
 <!-- head dome -->
 <path d="M66 96 C62 62 88 46 118 47 C152 48 174 66 172 100 L168 132 C160 120 150 100 140 96 L76 98 Z" fill="#f6a0d4"/>
 <!-- face -->
 <path d="M75 93 L140 95 C142 118 140 135 128 143 C115 150 95 150 84 142 C76 134 74 115 75 93 Z" fill="#fff1ed"/>
 <!-- right hair strand over face side -->
 <path d="M136 78 C150 80 160 95 160 120 C160 140 156 150 148 150 C140 140 138 120 138 100 Z" fill="#f394cc"/>
 <!-- bangs edge -->
 <path d="M68 96 C70 75 92 60 118 60 C142 60 156 74 156 96 L140 94 L132 88 L128 95 L110 93 L104 88 L98 95 L76 95 Z" fill="#f6a0d4" stroke="none"/>
 <!-- cat on top -->
 <path d="M96 42 C94 32 96 26 100 22 L108 28 C116 25 124 24 128 26 L134 19 C140 24 142 28 146 32 C156 36 158 44 152 50 C136 56 108 56 96 42 Z" fill="#f0a2f2" stroke="#b868c8"/>
 <path d="M146 24 C156 24 158 36 150 44 C146 38 144 30 146 24 Z" fill="#cc70e0" stroke="#b868c8"/>
 <path d="M106 42 C108 52 112 56 114 44 Z" fill="#fff" stroke="#9a5040"/>
 <!-- sign -->
 <path d="M14 120 L24 114 L28 175 L20 176 Z" fill="#fff"/>
 <path d="M22 114 L70 110 L72 172 L27 175 Z" fill="#f7a0a2"/>
 </g>
 <g fill="#fff">
  <rect x="42" y="120" width="12" height="8" rx="1" fill="none" stroke="#fff" stroke-width="2.2"/><rect x="47" y="115" width="2.2" height="19"/>
  <path d="M37 143 L44 139 L52 139 L59 143 L56 148 L54 147 L54 157 L42 157 L42 147 L40 148 Z"/>
  <circle cx="44" cy="164" r="1.8"/><circle cx="53" cy="164" r="3" fill="none" stroke="#fff" stroke-width="1.5"/>
 </g>
 <!-- teal streak & rings -->
 <path d="M90 62 L80 94 L88 94 Z" fill="#40c8d0"/>
 <ellipse cx="184" cy="97" rx="7" ry="13" fill="none" stroke="#3cbfc7" stroke-width="3"/>
 <path d="M68 82 C62 88 62 100 68 106" fill="none" stroke="#3cbfc7" stroke-width="3"/>
 <!-- hairclip 300 -->
 <path d="M126 78 L134 80 L128 86 L134 90 L126 94" fill="none" stroke="#e8c040" stroke-width="2"/>
 <circle cx="140" cy="86" r="4" fill="none" stroke="#e8c040" stroke-width="2"/><circle cx="150" cy="88" r="4" fill="none" stroke="#e8c040" stroke-width="2"/>
 <!-- eyes mouth -->
 <path d="M83 112 C85 105 92 105 94 112 M118 114 C120 107 127 107 129 114" fill="none" stroke="#5a2a20" stroke-width="1.8"/>
 <path d="M97 124 C99 128 103 128 104 124 C105 128 109 128 111 124" fill="none" stroke="#5a2a20" stroke-width="1.3"/>
 <path d="M100 128 C100 135 108 135 108 128 Z" fill="#f08890"/>
 <!-- highlights -->
 <ellipse cx="80" cy="70" rx="6" ry="5" fill="#fff"/><ellipse cx="158" cy="68" rx="7" ry="6" fill="#fff"/><circle cx="126" cy="68" r="2.5" fill="#fff"/><circle cx="97" cy="68" r="2" fill="#fff"/>
 <!-- body -->
 <path d="M104 150 L128 150 L134 172 C134 186 126 190 116 190 C106 190 100 184 100 172 Z" fill="#f7d0d8" stroke="#9a5040" stroke-width="0.9"/>
 <path d="M108 156 L126 156 L128 172 L106 172 Z" fill="#e64d8c"/>
 <path d="M112 160 C114 157 117 160 117 160 C117 160 120 157 122 160 L117 166 Z" fill="#f7a0b8"/>
 <rect x="107" y="146" width="18" height="7" rx="3" fill="#7a5a90"/>
 <path d="M88 140 C82 150 84 162 94 166 C100 158 100 148 96 140 Z" fill="#fff1ed" stroke="#9a5040" stroke-width="0.9"/>
 <path d="M68 146 C74 138 84 142 88 150 L84 166 C76 168 70 158 68 146 Z" fill="#8a72a8" stroke="#5a4a70" stroke-width="0.9"/>
 <path d="M100 178 C100 170 110 166 118 176 L126 180 L122 204 L106 204 Z" fill="#8a72a8" stroke="#5a4a70" stroke-width="0.9"/>
 <circle cx="114" cy="192" r="3" fill="#3cc8d0"/>
 <path d="M134 160 L142 176 L132 192 L128 176 Z" fill="#f06a9a" stroke="#9a5040" stroke-width="0.9"/>
 <path d="M148 150 L154 144 L160 150 L154 156 Z" fill="#fff" stroke="#e0457a" stroke-width="1.5"/>
</svg>

<!--RIGHTDONE-->
<!-- scrollbar -->
<div class="a" style="left:1900px;top:198px;width:20px;height:805px;background:#dadada"></div>
<div class="a" style="left:1900px;top:200px;width:19px;height:19px;background:#fff;border:1px solid #a8a8a8"></div>
<svg style="left:1905px;top:206px" width="10" height="6" viewBox="0 0 10 6"><path d="M0 5.5 L5 0.5 L10 5.5Z" fill="#666"/></svg>
<div class="a" style="left:1900px;top:314px;width:19px;height:64px;background:#fff;border:1px solid #a8a8a8"></div>
<div class="a" style="left:1900px;top:981px;width:19px;height:19px;background:#fff;border:1px solid #a8a8a8"></div>
<svg style="left:1905px;top:988px" width="10" height="6" viewBox="0 0 10 6"><path d="M0 0.5 L5 5.5 L10 0.5Z" fill="#666"/></svg>
<div class="a" style="left:1908px;top:720px;width:12px;height:73px;background:#4b5361;border-radius:4px 0 0 4px;border:1px solid #6b7380;border-right:none"></div>
<div class="a" style="left:1912px;top:728px;width:5px;height:58px;background:repeating-linear-gradient(rgba(0,0,0,0) 0 1px,#4b5361 1px 2.9px),linear-gradient(#353a44 0 40%,#d6d35a 40% 62%,#6fd0a0 62% 100%)"></div>

<!-- status bar -->
<div class="a" style="left:0;top:1002px;width:1920px;height:1px;background:#d4d4d4"></div>
<div class="a" style="left:0;top:1003px;width:1920px;height:27px;background:#f3f3f3"></div>
<div class="t" style="left:9px;top:1008px;font-size:14px;color:#444;line-height:16px;letter-spacing:1.1px">第 2 页，共 8 页</div>
<div class="t" style="left:143px;top:1008px;font-size:14px;color:#444;line-height:16px;letter-spacing:1.6px">8461 个字</div>
<div class="t" style="left:237px;top:1008px;font-size:14px;color:#444;line-height:16px;letter-spacing:1px">中文(中国)</div>
<svg style="left:333px;top:1008px" width="15" height="14" viewBox="0 0 15 14"><rect x="1.5" y="3.5" width="13" height="10" fill="#fff" stroke="#666" stroke-width="1"/><path d="M1.5 6 H14.5" stroke="#666" stroke-width="1.5"/><path d="M4 8.5 H5 M7 8.5 H8 M10 8.5 H11 M4 11 H5 M7 11 H8 M10 11 H11" stroke="#666" stroke-width="1"/><circle cx="3" cy="2.5" r="2.5" fill="#666"/></svg>
<svg style="left:1556px;top:1008px" width="18" height="16" viewBox="0 0 18 16"><path d="M0.5 0.5 H8 L9 1.5 L10 0.5 H17.5 V14 H10 L9 15 L8 14 H0.5 Z" fill="#fff" stroke="#666" stroke-width="1"/><path d="M9 1.5 V15 M2.5 4 H7 M2.5 6.5 H7 M2.5 9 H7 M2.5 11.5 H7 M11 4 H15.5 M11 6.5 H15.5 M11 9 H15.5 M11 11.5 H15.5" stroke="#666" stroke-width="0.9"/></svg>
<div class="a" style="left:1590px;top:1003px;width:49px;height:27px;background:#c6c6c6"></div>
<svg style="left:1605px;top:1008px" width="18" height="16" viewBox="0 0 18 16"><rect x="0.5" y="0.5" width="17" height="15" fill="#f3f3f3" stroke="#666" stroke-width="1"/><path d="M3 3.5 H15 M3 6 H15 M3 8.5 H15 M3 11 H15 M3 13 H15" stroke="#666" stroke-width="1"/></svg>
<svg style="left:1657px;top:1008px" width="18" height="16" viewBox="0 0 18 16"><path d="M0.5 0.5 H14.5 V7 M0.5 0.5 V14.5 H8" fill="#fff" stroke="#666" stroke-width="1"/><path d="M2.5 3.5 H12.5 M2.5 6 H12.5 M2.5 8.5 H8 M2.5 11 H8" stroke="#666" stroke-width="1"/><circle cx="13" cy="12" r="4.2" fill="#666"/><path d="M10 11 Q13 9 16 12 M12 9 Q11 13 13 16" fill="none" stroke="#f3f3f3" stroke-width="0.8"/></svg>
<div class="a" style="left:1697px;top:1016px;width:10px;height:1.2px;background:#444"></div>
<div class="a" style="left:1712px;top:1016px;width:125px;height:1px;background:#b0b0b0"></div>
<div class="a" style="left:1775px;top:1012px;width:1px;height:8px;background:#b0b0b0"></div>
<div class="a" style="left:1759px;top:1009px;width:7px;height:14px;background:#6a6a6a"></div>
<div class="a" style="left:1843px;top:1016px;width:11px;height:1.2px;background:#444"></div>
<div class="a" style="left:1848px;top:1010.5px;width:1.2px;height:11px;background:#444"></div>
<div class="t" style="left:1870px;top:1008px;font-size:14px;color:#444;line-height:16px">79%</div>

<!-- taskbar -->
<div class="a" style="left:0;top:1030px;width:1920px;height:9px;background:#463a2e"></div>
<div class="a" style="left:126px;top:1030px;width:61px;height:9px;background:#9a4e3e"></div>
<div class="a" style="left:0;top:1030px;width:1920px;height:9px;overflow:hidden"><div class="t" style="left:1746px;top:5px;font-size:14px;color:#eee;line-height:16px">下午 16:10</div><div class="a" style="left:1914px;top:0;width:1px;height:9px;background:#bbb"></div></div>

<!--STATUSDONE-->
</body></html>
